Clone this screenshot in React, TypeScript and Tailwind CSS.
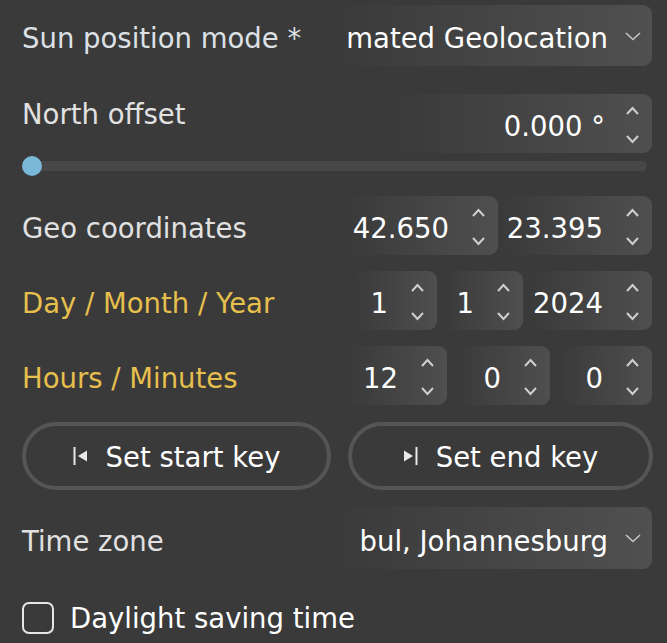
import React from 'react'

const font = { fontFamily: '"DejaVu Sans", "Noto Sans", sans-serif' }
// DejaVu sits a bit high compared with the reference, nudge text down
const txt = 'pt-[5px]'

function Chevron() {
  return (
    <svg width="16" height="9" viewBox="0 0 16 9" className="shrink-0">
      <polyline points="1,1 8,7.5 15,1" fill="none" stroke="#c4c4c4" strokeWidth="1.6" />
    </svg>
  )
}

function Arrow({ up }: { up?: boolean }) {
  return (
    <svg width="13" height="9" viewBox="0 0 13 9">
      <polyline
        points={up ? '1,8 6.5,2 12,8' : '1,1 6.5,7 12,1'}
        fill="none"
        stroke="#cfcfcf"
        strokeWidth="2"
      />
    </svg>
  )
}

function NumBox({ value, className }: { value: string; className: string }) {
  return (
    <div
      className={`flex h-full items-center justify-end rounded-[9px] bg-linear-to-r from-[#3a3a3a] to-[#4f4f4f] ${className}`}
    >
      <span className={`whitespace-nowrap text-white ${txt}`}>{value}</span>
      <div className="flex h-full w-[49px] shrink-0 flex-col items-end justify-center gap-[20px] pt-[3px] pr-[13px]">
        <Arrow up />
        <Arrow />
      </div>
    </div>
  )
}

// the combo is narrower than its text, only the tail end shows
function Dropdown({ value }: { value: string }) {
  return (
    <div className="flex h-full w-[322px] items-center justify-end rounded-[9px] bg-linear-to-r from-[#3a3a3a] to-[#505050]">
      <span className={`whitespace-nowrap text-white ${txt}`}>{value}</span>
      <div className="flex w-[44px] shrink-0 items-center pl-[17px] pt-[1px]">
        <Chevron />
      </div>
    </div>
  )
}

function KeyButton({ end, label, className }: { end?: boolean; label: string; className: string }) {
  return (
    <button
      className={`flex h-full items-center justify-center gap-[18px] rounded-full border-[4px] border-[#555555] text-white ${className}`}
    >
      <svg width="15" height="20" viewBox="0 0 15 20" className="shrink-0">
        {end ? (
          <>
            <polygon points="1,4.5 10,10 1,15.5" fill="#e8e8e8" />
            <rect x="12.5" y="1" width="2" height="18" fill="#e8e8e8" />
          </>
        ) : (
          <>
            <rect x="0.5" y="1" width="2" height="18" fill="#e8e8e8" />
            <polygon points="14,4.5 5,10 14,15.5" fill="#e8e8e8" />
          </>
        )}
      </svg>
      <span className="pt-[1px]">{label}</span>
    </button>
  )
}

export default function App() {
  return (
    <div
      className="flex h-[643px] w-[667px] flex-col overflow-hidden bg-[#3a3a3a] pt-[5px] pr-[15px] pl-[22px] text-[27.5px] leading-[32px] text-[#e1e1e1]"
      style={font}
    >
      <div className="flex h-[61px] items-center justify-between">
        <span className={`text-[#dde1e6] ${txt}`}>Sun position mode *</span>
        <Dropdown value="mated Geolocation" />
      </div>

      <div className="mt-[28px] flex h-[59px] justify-between">
        <span className="pt-[4px]">North offset</span>
        <NumBox value="0.000 °" className="w-[262px] [&>span]:mr-[-2px]" />
      </div>

      <div className="relative mt-[8px] mr-[5px] h-[10px] rounded-full bg-[#474747]">
        <div className="absolute top-[-5px] left-0 h-[20px] w-[20px] rounded-full bg-[#79b8d8]" />
      </div>

      <div className="mt-[25px] flex h-[59px] items-center justify-between">
        <span className={txt}>Geo coordinates</span>
        <div className="flex h-full gap-[2px]">
          <NumBox value="42.650" className="w-[153px]" />
          <NumBox value="23.395" className="w-[152px]" />
        </div>
      </div>

      <div className="mt-[16px] flex h-[59px] items-center justify-between">
        <span className={`text-[#e6bf4c] ${txt}`}>Day / Month / Year</span>
        <div className="flex h-full gap-[6px]">
          <NumBox value="1" className="w-[84px]" />
          <NumBox value="1" className="w-[80px]" />
          <NumBox value="2024" className="w-[123px]" />
        </div>
      </div>

      <div className="mt-[16px] flex h-[59px] items-center justify-between">
        <span className={`text-[#e6bf4c] ${txt}`}>Hours / Minutes</span>
        <div className="flex h-full gap-[10px]">
          <NumBox value="12" className="w-[99px]" />
          <NumBox value="0" className="w-[93px]" />
          <NumBox value="0" className="w-[92px]" />
        </div>
      </div>

      <div className="mt-[17px] mr-[-1px] flex h-[68px] justify-between">
        <KeyButton label="Set start key" className="w-[309px]" />
        <KeyButton end label="Set end key" className="w-[305px]" />
      </div>

      <div className="mt-[17px] flex h-[62px] items-center justify-between">
        <span className={txt}>Time zone</span>
        <Dropdown value="bul, Johannesburg" />
      </div>

      <div className="mt-[33px] flex items-center gap-[16px]">
        <div className="h-[32px] w-[32px] shrink-0 rounded-[7px] border-[2px] border-[#e6e6e6]" />
        <span className="text-white">Daylight saving time</span>
      </div>
    </div>
  )
}
